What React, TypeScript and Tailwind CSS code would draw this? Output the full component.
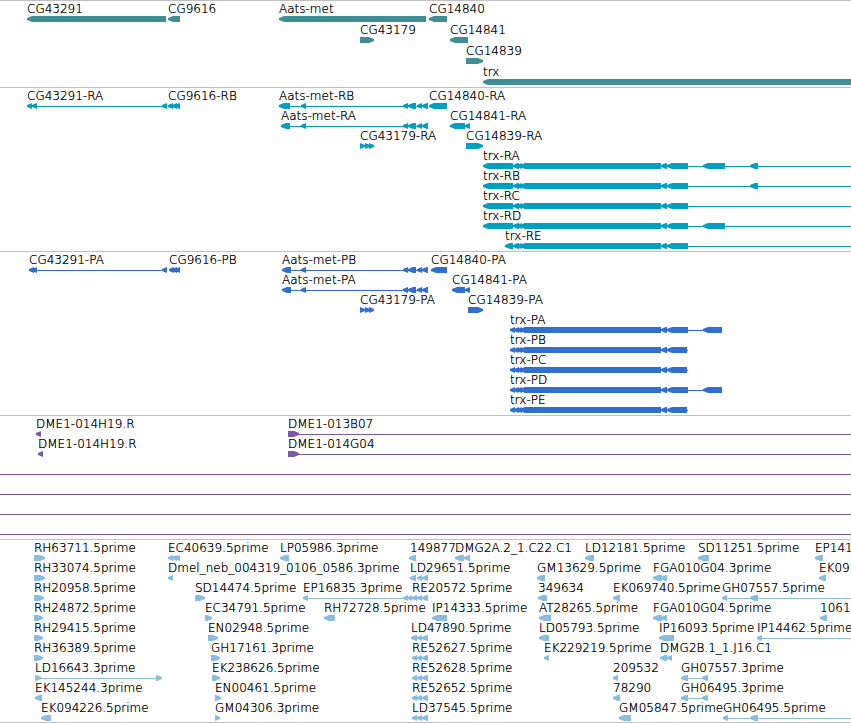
type Part = [start: number, end: number];

interface Feature {
  name?: string;
  at: number;
  parts: Part[];
  forward?: boolean;
  line?: Part;
}

interface Track {
  title: string;
  color: string;
  row: string;
  pad: string;
  rows: Feature[][];
}

/** Features that run past the visible region end here and are clipped. */
const FAR = 4000;

const left = (name: string, at: number, parts: Part[], line?: Part): Feature => ({ name, at, parts, line });
const right = (name: string, at: number, parts: Part[], line?: Part): Feature => ({ name, at, parts, line, forward: true });
const span = (): Feature => ({ at: 0, parts: [], line: [0, FAR] });

const metTail: Part[] = [[301, 306], [403, 408], [408, 416], [417, 422], [422, 428]];
const trxBody: Part[] = [[513, 519], [517, 522], [520, 661], [661, 667], [667, 688]];
const trxProtein: Part[] = [[510, 515], [514, 519], [517, 522], [520, 661], [661, 667]];
const estTail: Part[] = [[417, 422], [422, 428]];

const tracks: Track[] = [
  {
    title: "Genes",
    color: "#408e94",
    row: "h-[21px]",
    pad: "pb-0.5",
    rows: [
      [
        left("CG43291", 27, [[27, 166]]),
        left("CG9616", 168, [[168, 180]]),
        left("Aats-met", 279, [[279, 426]]),
        left("CG14840", 429, [[429, 447]]),
      ],
      [right("CG43179", 360, [[360, 374]]), left("CG14841", 450, [[450, 468]])],
      [right("CG14839", 466, [[466, 483]])],
      [left("trx", 483, [[483, FAR]])],
    ],
  },
  {
    title: "Transcripts",
    color: "#009fc0",
    row: "h-5",
    pad: "pb-[3px]",
    rows: [
      [
        left("CG43291-RA", 27, [[27, 32], [32, 37], [162, 167]], [27, 167]),
        left("CG9616-RB", 168, [[168, 173], [172, 177], [175, 180]]),
        left("Aats-met-RB", 279, [[279, 290], ...metTail], [279, 428]),
        left("CG14840-RA", 429, [[429, 447]]),
      ],
      [
        left("Aats-met-RA", 281, [[281, 290], ...metTail], [281, 428]),
        left("CG14841-RA", 450, [[450, 465], [465, 470]]),
      ],
      [
        right("CG43179-RA", 360, [[360, 365], [365, 370], [369, 374]]),
        right("CG14839-RA", 466, [[466, 483]]),
      ],
      [left("trx-RA", 483, [[483, 513], ...trxBody, [703, 725], [750, 758]], [483, FAR])],
      [left("trx-RB", 483, [[483, 513], ...trxBody, [750, 758]], [483, FAR])],
      [left("trx-RC", 483, [[483, 513], ...trxBody], [483, FAR])],
      [left("trx-RD", 483, [[483, 513], ...trxBody, [703, 725]], [483, FAR])],
      [left("trx-RE", 505, [[505, 513], ...trxBody], [505, FAR])],
    ],
  },
  {
    title: "Proteins",
    color: "#316ecd",
    row: "h-5",
    pad: "pb-[3px]",
    rows: [
      [
        left("CG43291-PA", 29, [[29, 34], [32, 37], [162, 167]], [29, 167]),
        left("CG9616-PB", 169, [[169, 174], [172, 177], [175, 180]]),
        left("Aats-met-PB", 282, [[282, 291], ...metTail], [282, 428]),
        left("CG14840-PA", 431, [[431, 447]]),
      ],
      [
        left("Aats-met-PA", 282, [[282, 291], ...metTail], [282, 428]),
        left("CG14841-PA", 452, [[452, 465], [465, 470]]),
      ],
      [
        right("CG43179-PA", 360, [[360, 365], [365, 370], [369, 374]]),
        right("CG14839-PA", 468, [[468, 483]]),
      ],
      [left("trx-PA", 510, [...trxProtein, [667, 688], [703, 722]], [510, 722])],
      [left("trx-PB", 510, [...trxProtein, [667, 687]], [510, 688])],
      [left("trx-PC", 510, [...trxProtein, [667, 687]], [510, 688])],
      [left("trx-PD", 510, [...trxProtein, [667, 688], [703, 722]], [510, 722])],
      [left("trx-PE", 510, [...trxProtein, [667, 687]], [510, 688])],
    ],
  },
  {
    title: "BAC ends",
    color: "#7859a9",
    row: "h-5",
    pad: "pb-[3px]",
    rows: [
      [left("DME1-014H19.R", 36, [[36, 41]]), right("DME1-013B07", 288, [[288, 299]], [288, FAR])],
      [left("DME1-014H19.R", 38, [[38, 43]]), right("DME1-014G04", 288, [[288, 299]], [288, FAR])],
      [span()],
      [span()],
      [span()],
      [span()],
    ],
  },
  {
    title: "ESTs",
    color: "#88bddf",
    row: "h-5",
    pad: "pb-0.5",
    rows: [
      [
        right("RH63711.5prime", 34, [[34, 45]]),
        left("EC40639.5prime", 168, [[168, 173], [172, 177], [175, 180]]),
        left("LP05986.3prime", 280, [[280, 289]]),
        left("149877", 410, [[409, 416]]),
        left("DMG2A.2_1.C22.C1", 455, [[455, 464], [464, 470]]),
        left("LD12181.5prime", 585, [[585, 594]]),
        left("SD11251.5prime", 698, [[698, 709]]),
        left("EP141", 815, [[815, 823]]),
      ],
      [
        right("RH33074.5prime", 34, [[34, 45]]),
        left("Dmel_neb_004319_0106_0586.3prime", 168, [[168, 173]]),
        left("LD29651.5prime", 410, [[410, 416], ...estTail]),
        left("GM13629.5prime", 537, [[537, 545]]),
        left("FGA010G04.3prime", 653, [[653, 662], [661, 667]]),
        left("EK09", 819, [[819, 826]]),
      ],
      [
        right("RH20958.5prime", 34, [[34, 44]]),
        right("SD14474.5prime", 195, [[195, 205]]),
        left("EP16835.3prime", 303, [[303, 308], [403, 408]], [303, 428]),
        left("RE20572.5prime", 412, [[408, 412], [412, 417], ...estTail]),
        left("349634", 538, [[538, 547]]),
        left("EK069740.5prime", 613, [[613, 620]]),
        left("GH07557.5prime", 722, [[722, 727], [750, 758]], [722, FAR]),
      ],
      [
        right("RH24872.5prime", 34, [[34, 43]]),
        right("EC34791.5prime", 205, [[205, 212]]),
        left("RH72728.5prime", 324, [[324, 335]]),
        left("IP14333.5prime", 432, [[432, 447]]),
        left("AT28265.5prime", 539, [[539, 551]]),
        left("FGA010G04.5prime", 653, [[653, 662], [661, 667]]),
        left("1061", 820, [[820, 827]]),
      ],
      [
        right("RH29415.5prime", 34, [[34, 43]]),
        right("EN02948.5prime", 208, [[208, 218]]),
        left("LD47890.5prime", 411, [[411, 417], ...estTail]),
        left("LD05793.5prime", 539, [[539, 549]]),
        left("IP16093.5prime", 659, [[659, 674]]),
        left("IP14462.5prime", 757, [[757, 762]], [757, FAR]),
      ],
      [
        right("RH36389.5prime", 34, [[34, 43]]),
        right("GH17161.3prime", 211, [[211, 220]]),
        left("RE52627.5prime", 412, [[412, 417], ...estTail]),
        left("EK229219.5prime", 544, [[544, 549]]),
        left("DMG2B.1_1.J16.C1", 660, [[660, 667], [667, 672]]),
      ],
      [
        right("LD16643.3prime", 35, [[35, 41], [156, 162]], [35, 162]),
        right("EK238626.5prime", 212, [[212, 220]]),
        left("RE52628.5prime", 412, [[412, 417], ...estTail]),
        left("209532", 613, [[613, 618]]),
        left("GH07557.3prime", 681, [[681, 688], [702, 708]], [681, 708]),
      ],
      [
        left("EK145244.3prime", 35, [[35, 42]]),
        right("EN00461.5prime", 215, [[215, 221]]),
        left("RE52652.5prime", 412, [[412, 417], ...estTail]),
        left("78290", 613, [[613, 620]]),
        left("GH06495.3prime", 681, [[681, 688], [702, 708]], [681, 708]),
      ],
      [
        left("EK094226.5prime", 41, [[41, 51]]),
        right("GM04306.3prime", 215, [[215, 220]]),
        left("LD37545.5prime", 412, [[412, 417], ...estTail]),
        left("GM05847.5prime", 619, [[619, 631]]),
        left("GH06495.5prime", 723, [[723, 728], [750, 758]], [723, FAR]),
      ],
    ],
  },
];

/** A block whose leading edge is tapered over five pixels. */
function arrow([a, b]: Part, forward?: boolean) {
  const head = Math.min(5, b - a);
  return forward
    ? `${a},0 ${b - head},0 ${b},2 ${b},4 ${b - head},6 ${a},6`
    : `${b},0 ${a + head},0 ${a},2 ${a},4 ${a + head},6 ${b},6`;
}

function Row({ features, color, height }: { features: Feature[]; color: string; height: string }) {
  return (
    <div className={`relative ${height}`}>
      <div className="h-[15px]">
        {features.map((f) =>
          f.name ? (
            <span key={f.name} className="absolute top-0 whitespace-nowrap" style={{ left: f.at }}>
              {f.name}
            </span>
          ) : null,
        )}
      </div>
      <svg className="block h-1.5 w-full overflow-visible" fill={color} aria-hidden="true">
        {features.map((f, i) => (
          <g key={i}>
            {f.line && <rect x={f.line[0]} y="3" width={f.line[1] - f.line[0]} height="1" />}
            {f.parts.map((p, j) => (
              <polygon key={j} points={arrow(p, f.forward)} />
            ))}
          </g>
        ))}
      </svg>
    </div>
  );
}

export default function App() {
  return (
    <main className="w-full overflow-hidden border-b border-[#c0c0c0] bg-white font-['DejaVu_Sans',sans-serif] text-xs leading-4 font-extralight text-black [text-shadow:0_0_0_#000]">
      {tracks.map((t) => (
        <section key={t.title} aria-label={t.title} className={`overflow-hidden border-t border-[#c0c0c0] ${t.pad}`}>
          {t.rows.map((features, i) => (
            <Row key={i} features={features} color={t.color} height={t.row} />
          ))}
        </section>
      ))}
    </main>
  );
}
